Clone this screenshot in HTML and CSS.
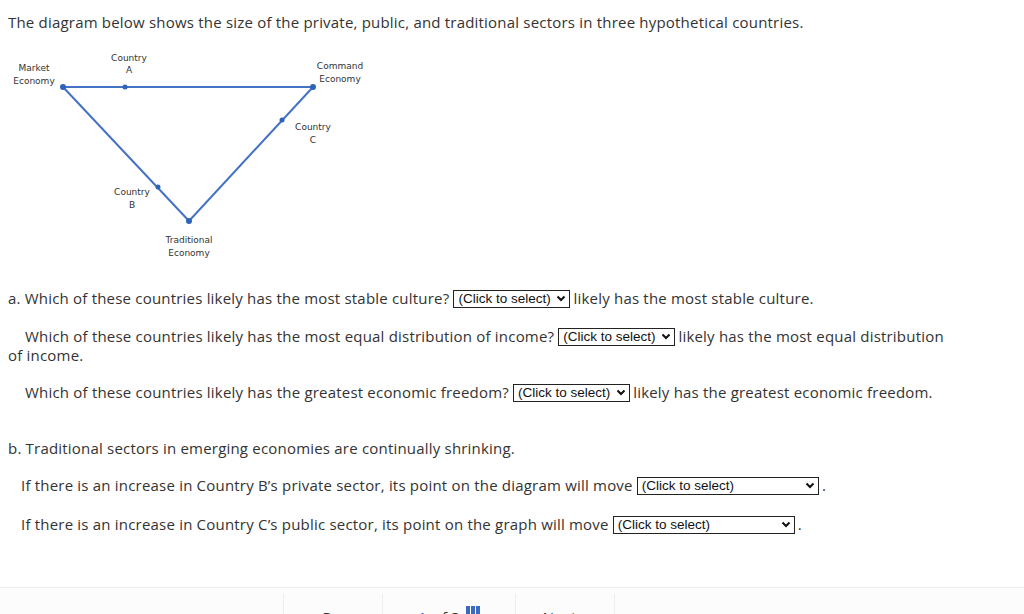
FILE: index.html
```html
<!DOCTYPE html>
<html lang="en">
<head>
<meta charset="utf-8">
<title>Economic Systems</title>
<link rel="stylesheet" href="styles.css">
</head>
<body>
<main class="content">
  <p class="intro">The diagram below shows the size of the private, public, and traditional sectors in three hypothetical countries.</p>
  <svg class="diagram" viewBox="8 45 380 220" width="380" height="220" aria-label="Triangle diagram of economies">
    <g class="lines">
      <line x1="63" y1="87" x2="313" y2="87"/>
      <line x1="63" y1="87" x2="189" y2="221"/>
      <line x1="313" y1="87" x2="189" y2="221"/>
    </g>
    <g class="dots">
      <circle cx="63" cy="87" r="3"/>
      <circle cx="313" cy="87" r="3"/>
      <circle cx="189" cy="221" r="3"/>
      <circle cx="125" cy="87" r="2.5"/>
      <circle cx="158" cy="187" r="2.5"/>
      <circle cx="282" cy="120" r="2.5"/>
    </g>
    <g class="labels">
      <text x="34" y="71">Market</text>
      <text x="34" y="84">Economy</text>
      <text x="129" y="61">Country</text>
      <text x="129" y="73">A</text>
      <text x="340" y="69">Command</text>
      <text x="340" y="82">Economy</text>
      <text x="313" y="130">Country</text>
      <text x="313" y="143">C</text>
      <text x="132" y="195">Country</text>
      <text x="132" y="208">B</text>
      <text x="189" y="243">Traditional</text>
      <text x="189" y="256">Economy</text>
    </g>
  </svg>

  <p class="q first">a. Which of these countries likely has the most stable culture? <span class="sel small"><select><option>(Click to select)</option></select><svg class="chev" viewBox="0 0 10 7"><polyline points="1.5,1.5 5,5 8.5,1.5"/></svg></span> likely has the most stable culture.</p>
  <p class="q indent">Which of these countries likely has the most equal distribution of income? <span class="sel small"><select><option>(Click to select)</option></select><svg class="chev" viewBox="0 0 10 7"><polyline points="1.5,1.5 5,5 8.5,1.5"/></svg></span> likely has the most equal distribution of income.</p>
  <p class="q indent">Which of these countries likely has the greatest economic freedom? <span class="sel small"><select><option>(Click to select)</option></select><svg class="chev" viewBox="0 0 10 7"><polyline points="1.5,1.5 5,5 8.5,1.5"/></svg></span> likely has the greatest economic freedom.</p>

  <p class="q part-b">b. Traditional sectors in emerging economies are continually shrinking.</p>
  <p class="q sub">If there is an increase in Country B’s private sector, its point on the diagram will move <span class="sel wide"><select><option>(Click to select)</option></select><svg class="chev" viewBox="0 0 10 7"><polyline points="1.5,1.5 5,5 8.5,1.5"/></svg></span> .</p>
  <p class="q sub last">If there is an increase in Country C’s public sector, its point on the graph will move <span class="sel wide w2"><select><option>(Click to select)</option></select><svg class="chev" viewBox="0 0 10 7"><polyline points="1.5,1.5 5,5 8.5,1.5"/></svg></span> .</p>
</main>
<footer class="pager">
  <div class="spacer"></div>
  <div class="item prev"><span class="arrow">‹</span> Prev</div>
  <div class="item count"><span class="num">1</span> of 3 <span class="grid"><i></i><i></i><i></i></span></div>
  <div class="item next">Next <span class="arrow">›</span></div>
  <div class="spacer"></div>
</footer>
</body>
</html>
```
FILE: styles.css
```css
html, body {
  height: 100%;
  overflow: hidden;
}
body {
  margin: 0;
  background: #fff;
  color: #333;
  font-family: "Open Sans", "Liberation Sans", sans-serif;
  font-size: 15px;
  line-height: 18px;
  letter-spacing: 0.2px;
}
.content {
  padding: 0 74px 0 8px;
  height: 587px;
}
p { margin: 0; }
.intro { padding-top: 13px; }
.diagram {
  display: block;
  margin-top: 14px;
}
.lines line {
  stroke: #4472c4;
  stroke-width: 2;
}
.dots circle { fill: #2f63b8; }
.labels text {
  font-family: "DejaVu Sans", "Liberation Sans", sans-serif;
  font-size: 9px;
  fill: #333;
  text-anchor: middle;
  letter-spacing: 0;
}
.q { margin-top: 19px; }
.q.first { margin-top: 24px; }
.q.indent { text-indent: 17px; }
.q.part-b { margin-top: 37px; }
.q.sub { padding-left: 13px; }
.q.sub.last { margin-top: 20px; }

.sel {
  position: relative;
  display: inline-block;
  vertical-align: middle;
  height: 18px;
  text-indent: 0;
  margin-top: -2px;
  margin-right: -1px;
}
.sel select {
  appearance: none;
  -webkit-appearance: none;
  box-sizing: border-box;
  height: 18px;
  width: 117px;
  border: 1px solid #222;
  border-radius: 0;
  background: #fff;
  color: #111;
  font-family: "Liberation Sans", Arial, sans-serif;
  font-size: 13.5px;
  letter-spacing: 0;
  line-height: 16px;
  padding: 0 0 0 4px;
  margin: 0;
  display: block;
}
.sel.wide select { width: 182px; }
.sel .chev {
  position: absolute;
  right: 4px;
  top: 5px;
  width: 10px;
  height: 7px;
  pointer-events: none;
}
.chev polyline {
  fill: none;
  stroke: #111;
  stroke-width: 2;
}

.pager {
  display: flex;
  border-top: 1px solid #ececec;
  background: #fcfcfc;
  height: 40px;
  padding-top: 6px;
}
.pager .spacer { width: 283px; }
.pager .spacer:last-child { flex: 1; border-left: 1px solid #eee; }
.pager .item {
  border-left: 1px solid #eee;
  display: flex;
  align-items: flex-start;
  justify-content: center;
  padding-top: 14px;
  font-size: 15px;
  color: #333;
  gap: 6px;
}
.pager .prev { width: 98px; }
.pager .count { width: 132px; }
.pager .next { width: 98px; }
.pager .arrow, .pager .num { color: #2f63b8; }
.pager .grid {
  display: inline-flex;
  gap: 1px;
  margin-top: -2px;
}
.pager .grid i {
  width: 4px;
  height: 10px;
  background: #3a6bbf;
}
```
